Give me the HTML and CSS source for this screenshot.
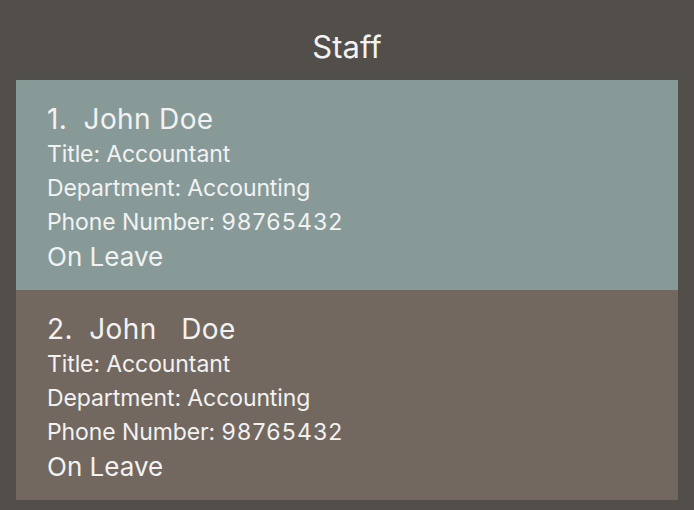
FILE: index.html
```html
<!DOCTYPE html>
<html>
<head>
<meta charset="utf-8">
<link rel="stylesheet" href="styles.css">
</head>
<body>
<div class="app">
  <h1 class="title">Staff</h1>
  <ul class="list">
    <li class="card card-selected">
      <div class="name">1.  John Doe</div>
      <div class="detail">Title: Accountant</div>
      <div class="detail">Department: Accounting</div>
      <div class="detail">Phone Number: <span class="num">98765432</span></div>
      <div class="status">On Leave</div>
    </li>
    <li class="card">
      <div class="name">2.  John   Doe</div>
      <div class="detail">Title: Accountant</div>
      <div class="detail">Department: Accounting</div>
      <div class="detail">Phone Number: <span class="num">98765432</span></div>
      <div class="status">On Leave</div>
    </li>
  </ul>
</div>
</body>
</html>
```
FILE: styles.css
```css
html, body {
  margin: 0;
  padding: 0;
  background: #524e4a;
}
.app {
  width: 694px;
  height: 510px;
  box-sizing: border-box;
  padding: 0 16px 10px 16px;
  font-family: Inter, "Noto Sans", sans-serif;
  color: #f2f2f2;
}
.title {
  margin: 0;
  height: 80px;
  line-height: 94px;
  text-align: center;
  font-size: 31px;
  font-weight: 400;
}
.list {
  list-style: none;
  margin: 0;
  padding: 0;
}
.card {
  height: 210px;
  box-sizing: border-box;
  padding: 21px 31px 15px 31px;
  background: #73685f;
}
.card-selected {
  background: #879a98;
}
.name {
  font-size: 28px;
  line-height: 36px;
  white-space: pre;
  letter-spacing: 0.35px;
}
.detail {
  font-size: 23px;
  line-height: 34px;
  letter-spacing: -0.1px;
}
.num {
  letter-spacing: 1.2px;
}
.status {
  font-size: 26px;
  line-height: 36px;
}
```
